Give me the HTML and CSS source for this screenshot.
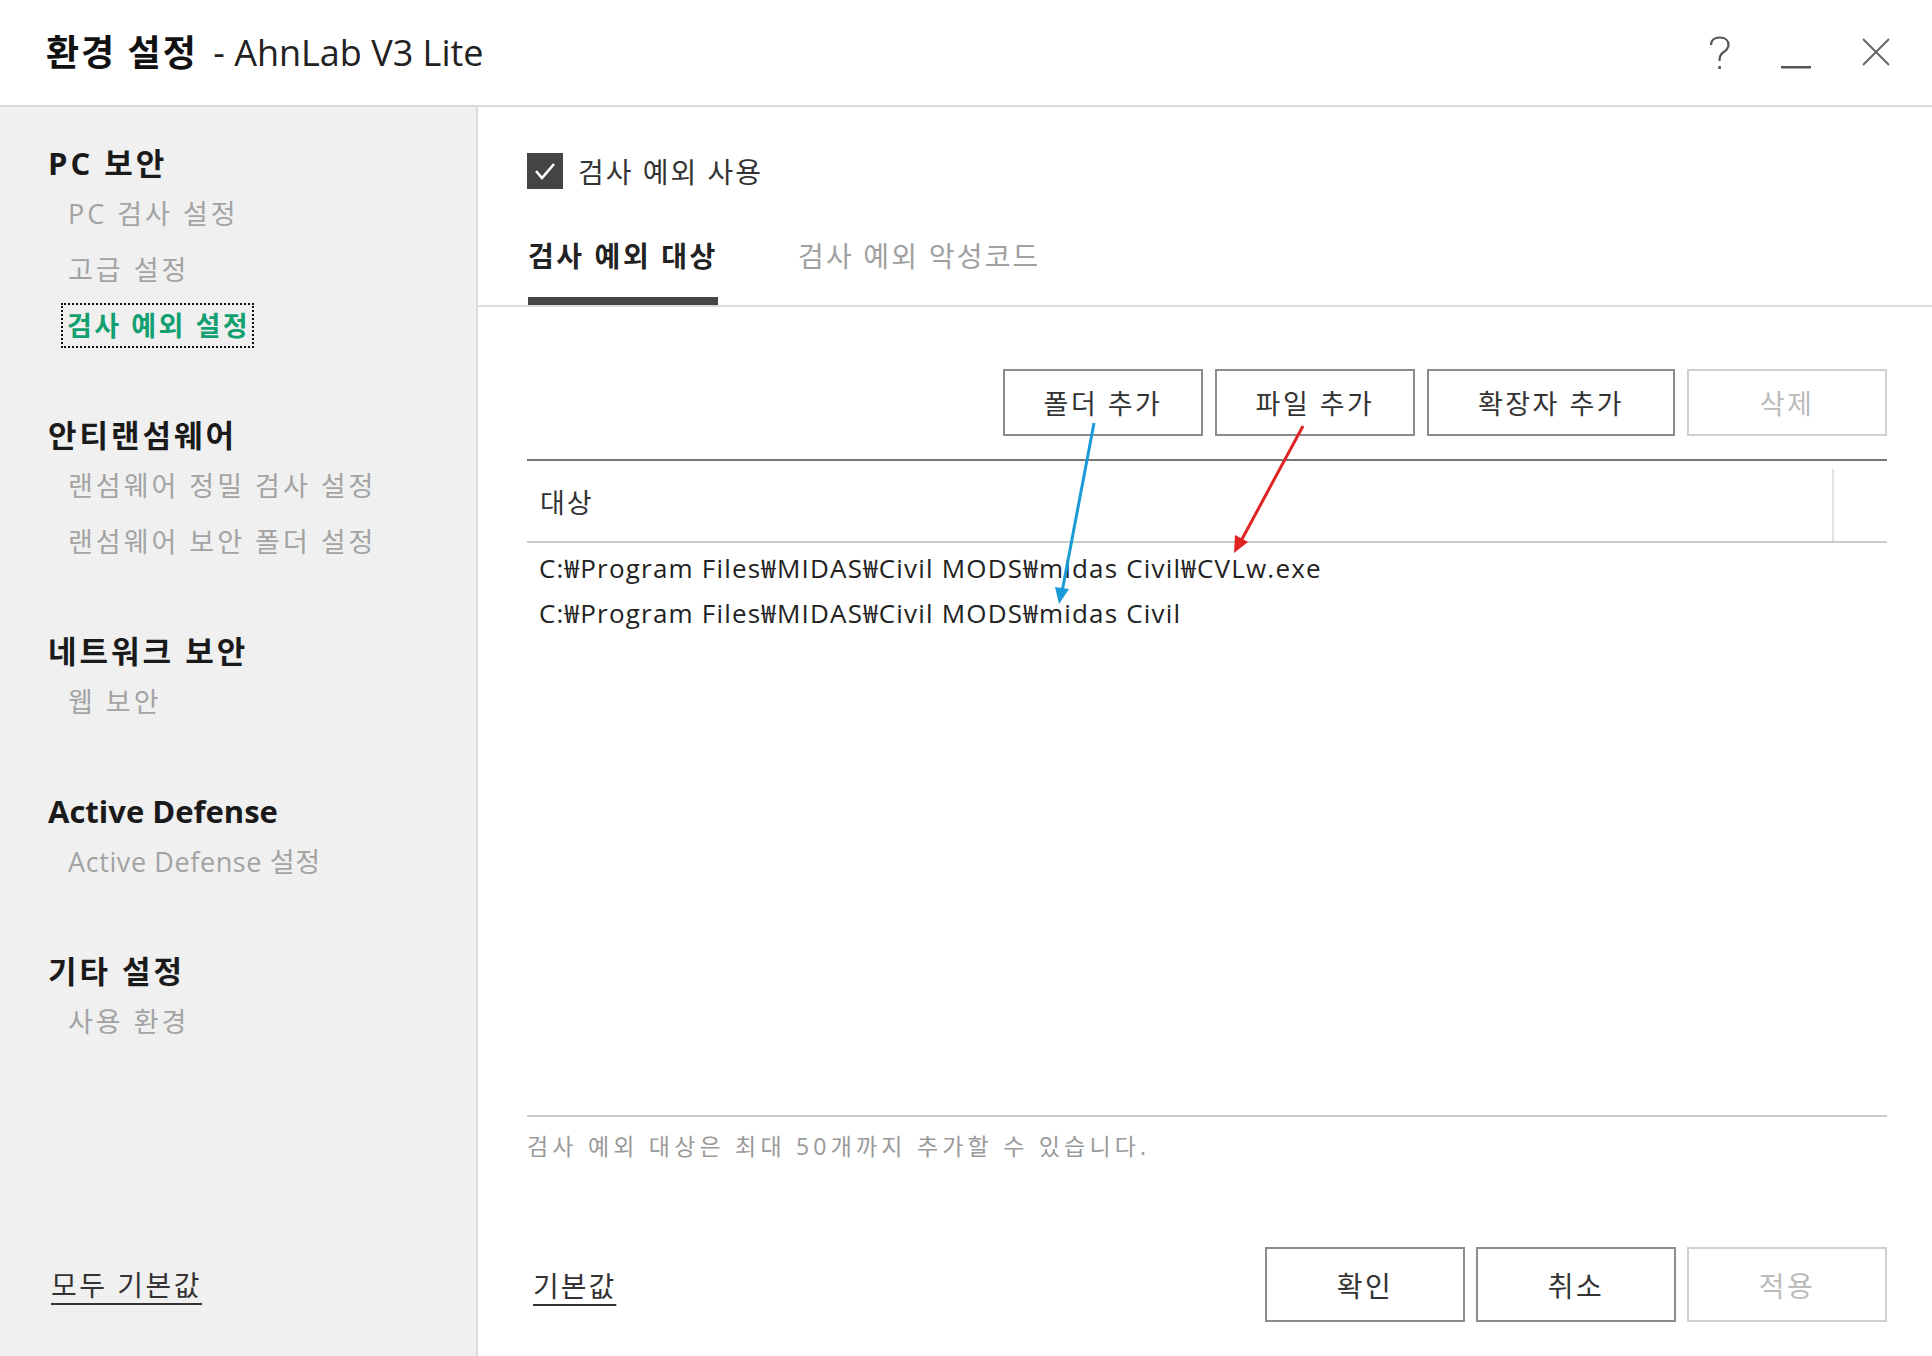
FILE: index.html
```html
<!DOCTYPE html>
<html>
<head>
    <title>환경 설정 - AhnLab V3 Lite</title>
    <link rel="stylesheet" href="styles.css">
</head>
<body>
    <div class="window">
        <div class="titlebar">
            <div class="title"><b>환경 설정</b> - AhnLab V3 Lite</div>
            <div class="controls">
                <svg class="ctl-help" width="22" height="36" viewBox="0 0 22 36">
                    <path d="M2 9 C2 4 6 1.5 11 1.5 C16 1.5 19.5 4.5 19.5 9 C19.5 13 16.5 15 13.5 17 C11 18.8 10.5 20.5 10.5 25" fill="none" stroke="#555" stroke-width="2.2"/>
                    <rect x="9.3" y="30" width="2.6" height="3" fill="#555"/>
                </svg>
                <svg class="ctl-min" width="30" height="30" viewBox="0 0 30 30">
                    <rect x="0" y="25" width="30" height="2.5" fill="#555"/>
                </svg>
                <svg class="ctl-close" width="28" height="28" viewBox="0 0 28 28">
                    <path d="M1 1 L27 27 M27 1 L1 27" stroke="#666" stroke-width="2"/>
                </svg>
            </div>
        </div>

        <div class="layout">
            <div class="sidebar">
                <div class="group">
                    <div class="group-title">PC 보안</div>
                    <div class="item">PC 검사 설정</div>
                    <div class="item">고급 설정</div>
                    <div class="item"><span class="active">검사 예외 설정</span></div>
                </div>
                <div class="group">
                    <div class="group-title">안티랜섬웨어</div>
                    <div class="item">랜섬웨어 정밀 검사 설정</div>
                    <div class="item">랜섬웨어 보안 폴더 설정</div>
                </div>
                <div class="group">
                    <div class="group-title">네트워크 보안</div>
                    <div class="item">웹 보안</div>
                </div>
                <div class="group">
                    <div class="group-title latin">Active Defense</div>
                    <div class="item latin">Active Defense 설정</div>
                </div>
                <div class="group">
                    <div class="group-title">기타 설정</div>
                    <div class="item">사용 환경</div>
                </div>
                <div class="reset-all"><a>모두 기본값</a></div>
            </div>

            <div class="main">
                <div class="check-row">
                    <span class="checkbox">
                        <svg width="36" height="36" viewBox="0 0 36 36">
                            <polyline points="9,18 15,25 27,11" fill="none" stroke="#fff" stroke-width="2.6"/>
                        </svg>
                    </span>
                    <span class="check-label">검사 예외 사용</span>
                </div>

                <div class="tabs">
                    <div class="tab active">검사 예외 대상</div>
                    <div class="tab">검사 예외 악성코드</div>
                </div>

                <div class="content">
                    <div class="toolbar">
                        <button class="btn w200">폴더 추가</button>
                        <button class="btn w200">파일 추가</button>
                        <button class="btn w248">확장자 추가</button>
                        <button class="btn w200 disabled">삭제</button>
                    </div>

                    <div class="table">
                        <div class="thead">
                            <div class="th">대상</div>
                            <div class="th-end"></div>
                        </div>
                        <div class="tbody">
                            <div class="row">C:₩Program Files₩MIDAS₩Civil MODS₩midas Civil₩CVLw.exe</div>
                            <div class="row">C:₩Program Files₩MIDAS₩Civil MODS₩midas Civil</div>
                        </div>
                    </div>

                    <div class="note">검사 예외 대상은 최대 50개까지 추가할 수 있습니다.</div>

                    <div class="footer">
                        <a class="link">기본값</a>
                        <div class="footer-btns">
                            <button class="btn big">확인</button>
                            <button class="btn big">취소</button>
                            <button class="btn big disabled">적용</button>
                        </div>
                    </div>
                </div>
            </div>
        </div>
    </div>

    <!-- annotation arrows drawn over the screenshot -->
    <svg class="arrows" width="1932" height="1356" viewBox="0 0 1932 1356">
        <line x1="1094" y1="423" x2="1062" y2="592" stroke="#1a9ad6" stroke-width="3"/>
        <polygon points="1059,604 1069,589 1055,587" fill="#1a9ad6"/>
        <line x1="1303" y1="426" x2="1241" y2="541" stroke="#e02424" stroke-width="3"/>
        <polygon points="1234,553 1248,542 1235,535" fill="#e02424"/>
    </svg>
</body>
</html>
```

FILE: styles.css
```css
body {
    margin: 0;
    font-family: "Open Sans", "Noto Sans CJK KR", sans-serif;
    color: #333;
    background-color: #fff;
}
.window {
    width: 1932px;
    height: 1356px;
    display: flex;
    flex-direction: column;
    overflow: hidden;
}
.titlebar {
    height: 105px;
    border-bottom: 2px solid #d9d9d9;
    display: flex;
    align-items: center;
    justify-content: space-between;
    padding-left: 46px;
    background-color: #fff;
}
.title {
    font-size: 36px;
    color: #222;
    margin-top: -4px;
}
.title b {
    color: #111;
    letter-spacing: 2px;
    margin-right: 6px;
}
.controls {
    display: flex;
    align-items: center;
    padding-right: 42px;
}
.ctl-help {
    margin-right: 50px;
    margin-top: 2px;
}
.ctl-min {
    margin-right: 51px;
    margin-top: 6px;
}
.ctl-close {
    margin-top: -2px;
}
.layout {
    flex: 1;
    display: flex;
}
.sidebar {
    width: 478px;
    border-right: 2px solid #dcdcdc;
    background-color: #f0f0f0;
    padding: 33px 0 0 48px;
    box-sizing: border-box;
    display: flex;
    flex-direction: column;
}
.group {
    margin-bottom: 58px;
}
.group-title {
    font-size: 31px;
    font-weight: bold;
    line-height: 46px;
    color: #1a1a1a;
    letter-spacing: 3px;
}
.group-title.latin {
    letter-spacing: 0;
}
.item {
    font-size: 27px;
    line-height: 56px;
    padding-left: 20px;
    color: #a3a3a3;
    letter-spacing: 3px;
}
.item.latin {
    letter-spacing: 0.6px;
}
.item .active {
    display: inline-block;
    color: #13a070;
    font-weight: bold;
    line-height: 41px;
    padding: 0 2px 0 4px;
    margin-left: -5px;
    outline: 2px dotted #111;
    letter-spacing: 2.5px;
}
.reset-all {
    margin-top: auto;
    margin-bottom: 51px;
    padding-left: 3px;
    font-size: 28px;
    line-height: 40px;
    letter-spacing: 2.5px;
}
.reset-all a,
.link {
    color: #333;
    text-decoration: underline;
    text-underline-offset: 7px;
    text-decoration-thickness: 2px;
}
.main {
    flex: 1;
    display: flex;
    flex-direction: column;
    background-color: #fff;
}
.check-row {
    display: flex;
    align-items: center;
    margin-top: 46px;
    padding-left: 49px;
    height: 36px;
}
.checkbox {
    width: 36px;
    height: 36px;
    background-color: #444;
    display: inline-block;
}
.checkbox svg {
    display: block;
}
.check-label {
    font-size: 28px;
    margin-left: 15px;
    color: #333;
    letter-spacing: 2px;
}
.tabs {
    display: flex;
    margin-top: 34px;
    padding-left: 50px;
    border-bottom: 2px solid #dcdcdc;
    height: 82px;
}
.tab {
    font-size: 28px;
    line-height: 66px;
    padding-bottom: 10px;
    color: #a0a0a0;
    margin-right: 80px;
    border-bottom: 8px solid transparent;
    letter-spacing: 2.2px;
}
.tab.active {
    color: #222;
    font-weight: bold;
    border-bottom-color: #444;
    letter-spacing: 2.6px;
}
.content {
    flex: 1;
    display: flex;
    flex-direction: column;
    padding: 62px 45px 34px 49px;
}
.toolbar {
    display: flex;
    justify-content: flex-end;
    gap: 12px;
}
.btn {
    height: 67px;
    border: 2px solid #8c8c8c;
    background-color: #fff;
    font-family: "Open Sans", "Noto Sans CJK KR", sans-serif;
    font-size: 27px;
    color: #333;
    padding: 0;
    letter-spacing: 2.5px;
    cursor: pointer;
}
.btn.w200 {
    width: 200px;
}
.btn.w248 {
    width: 248px;
}
.btn.disabled {
    border-color: #cfcfcf;
    color: #bbb;
}
.table {
    margin-top: 23px;
    border-top: 2px solid #777;
}
.thead {
    display: flex;
    height: 80px;
    border-bottom: 2px solid #cbcbcb;
}
.th {
    flex: 1;
    font-size: 27px;
    line-height: 84px;
    padding-left: 13px;
    color: #333;
    letter-spacing: 2px;
}
.th-end {
    width: 53px;
    margin-top: 8px;
    border-left: 2px solid #e2e2e2;
}
.tbody {
    height: 574px;
    padding-top: 3px;
    box-sizing: border-box;
    border-bottom: 2px solid #cbcbcb;
}
.row {
    font-size: 26px;
    line-height: 45px;
    padding-left: 12px;
    color: #222;
    letter-spacing: 1.2px;
}
.note {
    font-size: 23px;
    letter-spacing: 4.2px;
    line-height: 40px;
    margin-top: 9px;
    color: #9a9a9a;
}
.footer {
    margin-top: auto;
    display: flex;
    align-items: center;
    justify-content: space-between;
    padding-left: 6px;
}
.link {
    font-size: 28px;
    letter-spacing: 2px;
}
.footer-btns {
    display: flex;
    gap: 11px;
}
.btn.big {
    width: 200px;
    height: 75px;
    font-size: 28px;
}
.arrows {
    position: absolute;
    left: 0;
    top: 0;
    pointer-events: none;
}
```
